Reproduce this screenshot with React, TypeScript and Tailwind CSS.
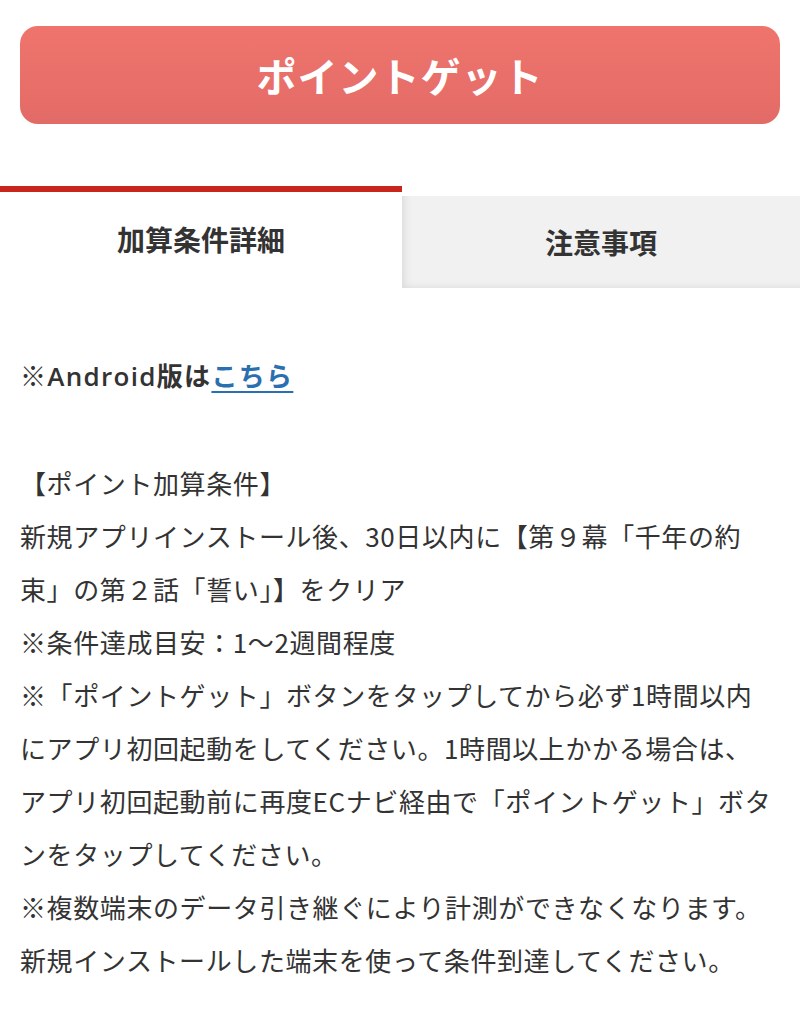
import React from 'react';

const conditionLines = [
  '【ポイント加算条件】',
  '新規アプリインストール後、30日以内に【第９幕「千年の約',
  '束」の第２話「誓い」】をクリア',
  '※条件達成目安：1～2週間程度',
  '※「ポイントゲット」ボタンをタップしてから必ず1時間以内',
  'にアプリ初回起動をしてください。1時間以上かかる場合は、',
  'アプリ初回起動前に再度ECナビ経由で「ポイントゲット」ボタ',
  'ンをタップしてください。',
  '※複数端末のデータ引き継ぐにより計測ができなくなります。',
  '新規インストールした端末を使って条件到達してください。',
];

const App: React.FC = () => {
  return (
    <div
      className="min-h-screen bg-white text-[#333333]"
      style={{ fontFamily: '"Noto Sans CJK JP", "Noto Sans", sans-serif' }}
    >
      {/* Point get button */}
      <div className="px-5 pt-[26px]">
        <button className="w-full h-[98px] rounded-[18px] bg-gradient-to-b from-[#ef746d] to-[#e36b67] text-white text-[40px] font-bold tracking-[1px] flex items-center justify-center">
          ポイントゲット
        </button>
      </div>

      {/* Tabs */}
      <div className="mt-[62px] flex items-start">
        <div className="w-[402px] h-[102px] border-t-[6px] border-[#c8261d] bg-white flex items-center justify-center pb-[2px]">
          <span className="text-[28px] font-bold">加算条件詳細</span>
        </div>
        <div className="flex-1 mt-[10px] h-[92px] bg-[#f1f1f1] shadow-[inset_8px_-6px_8px_-6px_rgba(0,0,0,0.10)] flex items-center justify-center">
          <span className="text-[28px] font-bold">注意事項</span>
        </div>
      </div>

      {/* Content */}
      <div className="px-5 pt-[62px] text-[26px] leading-[53px]">
        <p
          className="font-semibold tracking-[1.3px]"
          style={{ fontFamily: '"Open Sans", "Noto Sans CJK JP", sans-serif' }}
        >
          ※Android版は
          <a href="#" className="text-[#2a6fb0] underline underline-offset-[5px] decoration-2">
            こちら
          </a>
        </p>
        <div className="mt-[53px] whitespace-nowrap tracking-[0.6px]">
          {conditionLines.map((line, i) => (
            <span key={i} className="block">
              {line}
            </span>
          ))}
        </div>
      </div>
    </div>
  );
};

export default App;
